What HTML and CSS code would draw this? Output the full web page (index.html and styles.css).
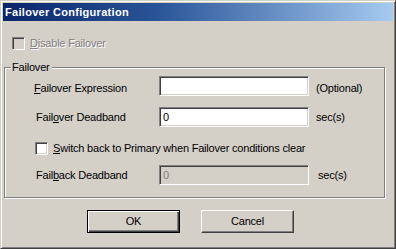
FILE: index.html
```html
<!DOCTYPE html>
<html>
<head>
<meta charset="utf-8">
<link rel="stylesheet" href="styles.css">
</head>
<body>
<div class="window">
  <div class="titlebar">Failover Configuration</div>
  <div class="content">
    <div class="check-row disabled top-check">
      <span class="checkbox checkbox--disabled"></span>
      <span class="check-text"><u>D</u>isable Failover</span>
    </div>
    <div class="group">
      <div class="group-title">Failover</div>
      <div class="row row--first row--low">
        <span class="label"><u>F</u>ailover Expression</span>
        <span class="input"></span>
        <span class="note">(Optional)</span>
      </div>
      <div class="row row--second">
        <span class="label label--in">Fail<u>o</u>ver Deadband</span>
        <span class="input"><span class="input-text">0</span></span>
        <span class="note">sec(s)</span>
      </div>
      <div class="check-row inner-check">
        <span class="checkbox"></span>
        <span class="check-text"><u>S</u>witch back to Primary when Failover conditions clear</span>
      </div>
      <div class="row row--fourth">
        <span class="label label--in">Fail<u>b</u>ack Deadband</span>
        <span class="input input--disabled"><span class="input-text">0</span></span>
        <span class="note note--wide">sec(s)</span>
      </div>
    </div>
    <div class="buttons">
      <div class="button button--default">OK</div>
      <div class="button">Cancel</div>
    </div>
  </div>
</div>
</body>
</html>
```

FILE: styles.css
```css
html, body {
  margin: 0;
  padding: 0;
  background: #d4d0c8;
}

.window {
  width: 396px;
  height: 249px;
  box-sizing: border-box;
  background: #d4d0c8;
  border: 1px solid;
  border-color: #d4d0c8 #404040 #404040 #d4d0c8;
  box-shadow: inset 1px 1px 0 #ffffff, inset -1px -1px 0 #808080;
  padding: 2px;
  font-family: "Liberation Sans", Arial, sans-serif;
  font-size: 11px;
  color: #000;
  overflow: hidden;
}

.titlebar {
  height: 18px;
  line-height: 18px;
  padding-left: 2px;
  background: linear-gradient(to right, #0a246a 0%, #2a5598 40%, #a6caf0 100%);
  color: #fff;
  font-weight: bold;
  font-size: 11px;
  letter-spacing: 0.3px;
  white-space: nowrap;
}

.content {
  display: flex;
  flex-direction: column;
  letter-spacing: -0.2px;
}

u {
  text-decoration: underline;
  text-underline-offset: 1px;
}

.check-row {
  display: flex;
  align-items: center;
  height: 13px;
  line-height: 13px;
}

.top-check {
  margin-top: 16px;
  margin-left: 9px;
}

.checkbox {
  width: 13px;
  height: 13px;
  box-sizing: border-box;
  background: #fff;
  border: 1px solid;
  border-color: #808080 #ffffff #ffffff #808080;
  box-shadow: inset 1px 1px 0 #404040, inset -1px -1px 0 #d4d0c8;
  flex: none;
}

.checkbox--disabled {
  background: #d4d0c8;
}

.check-text {
  margin-left: 5px;
  white-space: nowrap;
}

.disabled .check-text {
  color: #808080;
  text-shadow: 1px 1px 0 #ffffff;
}

.group {
  margin-top: 17px;
  margin-left: 1px;
  width: 381px;
  height: 131px;
  box-sizing: border-box;
  border: 1px solid #808080;
  box-shadow: 1px 1px 0 #ffffff, inset 1px 1px 0 #ffffff;
  display: flex;
  flex-direction: column;
}

.group-title {
  align-self: flex-start;
  margin-top: -7px;
  margin-left: 6px;
  padding: 0 2px 0 1px;
  height: 13px;
  line-height: 13px;
  background: #d4d0c8;
}

.row {
  display: flex;
  align-items: center;
  height: 20px;
  padding-left: 29px;
}

.row--first { margin-top: 2px; }
.row--second { margin-top: 11px; }
.row--fourth { margin-top: 10px; }

.inner-check {
  margin-top: 15px;
  margin-left: 30px;
}

.label {
  width: 125px;
  box-sizing: border-box;
  line-height: 13px;
  white-space: nowrap;
  flex: none;
}

.label--in {
  padding-left: 2px;
}

.row--low .label,
.row--low .note {
  padding-top: 5px;
}

.input {
  width: 150px;
  height: 20px;
  box-sizing: border-box;
  background: #fff;
  border: 1px solid;
  border-color: #808080 #ffffff #ffffff #808080;
  box-shadow: inset 1px 1px 0 #404040, inset -1px -1px 0 #d4d0c8;
  padding-left: 3px;
  line-height: 18px;
  flex: none;
}

.input--disabled {
  background: #d4d0c8;
  color: #808080;
}

.note {
  margin-left: 7px;
  line-height: 13px;
  white-space: nowrap;
}

.note--wide {
  margin-left: 9px;
}

.buttons {
  display: flex;
  gap: 21px;
  margin-top: 12px;
  margin-left: 84px;
}

.button {
  width: 93px;
  height: 23px;
  box-sizing: border-box;
  border: 1px solid;
  border-color: #ffffff #404040 #404040 #ffffff;
  box-shadow: inset -1px -1px 0 #808080, inset 1px 1px 0 #d4d0c8;
  display: flex;
  align-items: center;
  justify-content: center;
  line-height: 13px;
}

.button--default {
  border-color: #000;
  box-shadow: inset 1px 1px 0 #ffffff, inset -1px -1px 0 #404040, inset -2px -2px 0 #808080;
}
```
